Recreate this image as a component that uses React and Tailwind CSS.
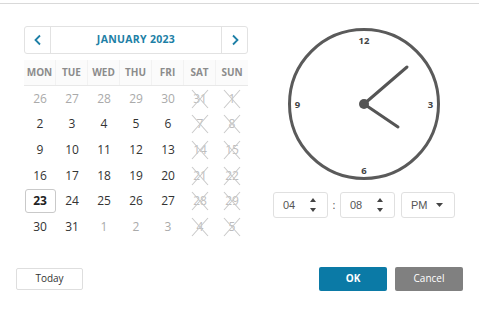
import React from "react";

const DAY_NAMES = ["MON", "TUE", "WED", "THU", "FRI", "SAT", "SUN"];

// Weeks of January 2023, padded with days from the neighbour months
const WEEKS = [
  [[26, 0], [27, 0], [28, 0], [29, 0], [30, 0], [31, 0], [1, 1]],
  [[2, 1], [3, 1], [4, 1], [5, 1], [6, 1], [7, 1], [8, 1]],
  [[9, 1], [10, 1], [11, 1], [12, 1], [13, 1], [14, 1], [15, 1]],
  [[16, 1], [17, 1], [18, 1], [19, 1], [20, 1], [21, 1], [22, 1]],
  [[23, 1], [24, 1], [25, 1], [26, 1], [27, 1], [28, 1], [29, 1]],
  [[30, 1], [31, 1], [1, 0], [2, 0], [3, 0], [4, 0], [5, 0]],
];

function Chevron({ dir }) {
  return (
    <svg width="10" height="12" viewBox="0 0 10 12" fill="none">
      <path
        d={dir === "left" ? "M7 1.5 L2.5 6 L7 10.5" : "M3 1.5 L7.5 6 L3 10.5"}
        stroke="#1d7fa6"
        strokeWidth="1.8"
      />
    </svg>
  );
}

function DayCell({ day, current, col, isToday }) {
  const weekend = col >= 5;
  if (weekend) {
    return (
      <div className="relative flex items-center justify-center h-full text-[12px] text-[#bdbdbd]">
        {day}
        <svg className="absolute left-1/2 top-1/2 -translate-x-1/2 -translate-y-1/2" width="22" height="20" viewBox="0 0 22 20">
          <path d="M3 1 L19 19 M19 1 L3 19" stroke="#cacaca" strokeWidth="1.1" />
        </svg>
      </div>
    );
  }
  if (isToday) {
    return (
      <div className="flex items-center justify-center h-full">
        <div className="w-[31px] h-[24px] flex items-center justify-center border border-[#c9c9c9] rounded-[3px] text-[12px] font-bold text-[#222]">
          {day}
        </div>
      </div>
    );
  }
  return (
    <div className={`flex items-center justify-center h-full text-[12px] ${current ? "text-[#333]" : "text-[#aaa]"}`}>
      {day}
    </div>
  );
}

function Calendar() {
  return (
    <div className="w-[224px]">
      <div className="flex h-[28px] border border-[#e2e2e2] rounded-[3px]">
        <div className="w-[26px] flex items-center justify-center border-r border-[#e2e2e2]">
          <Chevron dir="left" />
        </div>
        <div className="flex-1 flex items-center justify-center text-[10.5px] font-bold text-[#1d7fa6] tracking-[0.3px]">
          JANUARY 2023
        </div>
        <div className="w-[26px] flex items-center justify-center border-l border-[#e2e2e2]">
          <Chevron dir="right" />
        </div>
      </div>

      <div className="grid grid-cols-7 mt-[6px] h-[26px] bg-[#fbfbfb] border-b border-[#e8e8e8]">
        {DAY_NAMES.map((d, i) => (
          <div
            key={d}
            className={`flex items-center justify-center text-[10px] font-bold text-[#8c8c8c] ${i < 6 ? "border-r border-[#f2f2f2]" : ""}`}
          >
            {d}
          </div>
        ))}
      </div>

      {WEEKS.map((week, r) => (
        <div key={r} className="grid grid-cols-7 h-[25.6px]">
          {week.map(([day, current], c) => (
            <DayCell key={c} day={day} current={current} col={c} isToday={r === 4 && c === 0} />
          ))}
        </div>
      ))}
    </div>
  );
}

function Clock() {
  return (
    <svg width="156" height="156" viewBox="0 0 156 156">
      <circle cx="78" cy="78" r="74.5" fill="none" stroke="#5a5a5a" strokeWidth="3" />
      <g fill="#444" fontSize="9.5" fontWeight="700" fontFamily="'Open Sans', sans-serif" textAnchor="middle">
        <text x="78" y="18">12</text>
        <text x="144.5" y="82">3</text>
        <text x="78" y="148">6</text>
        <text x="11.5" y="82">9</text>
      </g>
      <line x1="78" y1="78" x2="121" y2="41" stroke="#555" strokeWidth="3" strokeLinecap="round" />
      <line x1="78" y1="78" x2="112" y2="101" stroke="#555" strokeWidth="3" strokeLinecap="round" />
      <circle cx="78" cy="78" r="5" fill="#555" />
    </svg>
  );
}

function Spinner() {
  return (
    <div className="flex flex-col items-center gap-[6px]">
      <svg width="6" height="4" viewBox="0 0 6 4"><path d="M0 4 L3 0 L6 4 Z" fill="#444" /></svg>
      <svg width="6" height="4" viewBox="0 0 6 4"><path d="M0 0 L3 4 L6 0 Z" fill="#444" /></svg>
    </div>
  );
}

function TimeBox({ value }) {
  return (
    <div className="w-[55px] h-[26px] flex items-center justify-between pl-[9px] pr-[11px] border border-[#e0e0e0] rounded-[3px] text-[11px] text-[#555] font-['Liberation_Sans',Arial,sans-serif]">
      <span>{value}</span>
      <Spinner />
    </div>
  );
}

export default function App() {
  return (
    <div className="w-[479px] h-[313px] bg-white font-['Open_Sans',sans-serif] overflow-hidden">
      <div className="mt-[3px] border-t border-[#d9d9d9]" />
      <div className="flex pl-[24px] pt-[22px]">
        <Calendar />
        <div className="ml-[25px] w-[182px] flex flex-col items-center">
          <Clock />
          <div className="flex items-center mt-[10px]">
            <TimeBox value="04" />
            <span className="w-[12px] text-center text-[11px] text-[#555]">:</span>
            <TimeBox value="08" />
            <div className="ml-[6px] w-[54px] h-[26px] flex items-center justify-between pl-[9px] pr-[11px] border border-[#e0e0e0] rounded-[3px] text-[11px] text-[#555] font-['Liberation_Sans',Arial,sans-serif]">
              <span>PM</span>
              <svg width="7" height="4" viewBox="0 0 7 4"><path d="M0 0 L3.5 4 L7 0 Z" fill="#444" /></svg>
            </div>
          </div>
        </div>
      </div>
      <div className="flex items-center mt-[27px] pl-[16px] pr-[16px]">
        <button className="w-[67px] h-[22px] border border-[#dedede] rounded-[2px] text-[10px] text-[#333] bg-white">
          Today
        </button>
        <div className="flex-1" />
        <button className="w-[68px] h-[24px] rounded-[2px] bg-[#0b7aa6] text-white text-[10px] font-bold">
          OK
        </button>
        <button className="ml-[8px] w-[68px] h-[24px] rounded-[2px] bg-[#808080] text-white text-[10px]">
          Cancel
        </button>
      </div>
    </div>
  );
}
